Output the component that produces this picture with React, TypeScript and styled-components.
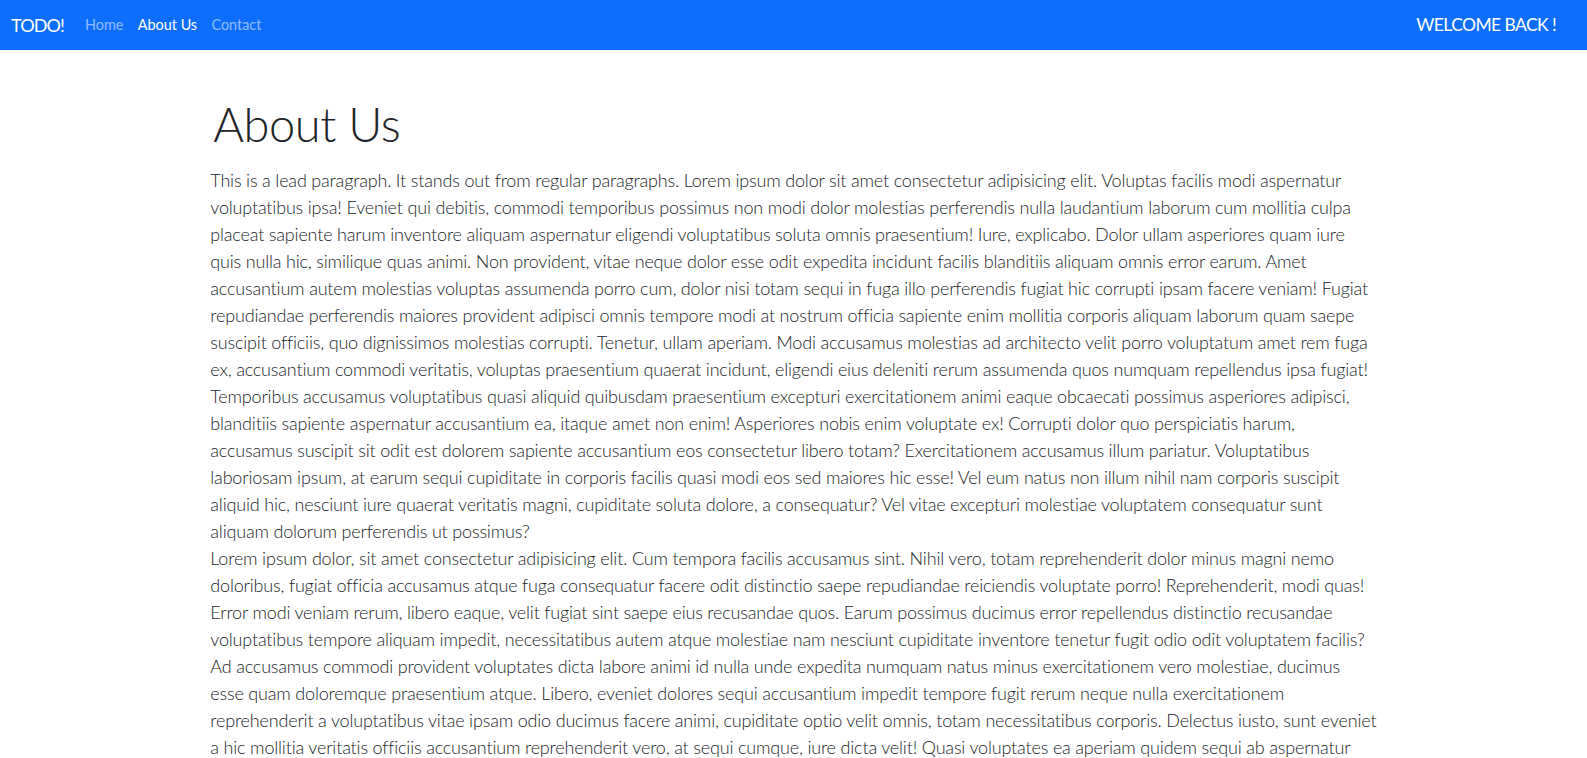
import React from "react";
import styled, { createGlobalStyle } from "styled-components";

const GlobalStyle = createGlobalStyle`
  html, body {
    margin: 0;
    padding: 0;
    background: #ffffff;
  }
  body {
    font-family: Lato, "Open Sans", sans-serif;
    color: #212529;
    -webkit-font-smoothing: antialiased;
  }
  * { box-sizing: border-box; }
  ::-webkit-scrollbar { width: 5px; }
  ::-webkit-scrollbar-track { background: #f0f0f0; }
  ::-webkit-scrollbar-thumb {
    background: #bdbdbd;
    border-left: 2px solid #f0f0f0;
    border-right: 1px solid #f0f0f0;
    border-top: 12px solid #f0f0f0;
  }
`;

const Navbar = styled.nav`
  height: 50px;
  background: #0d6efd;
  display: flex;
  align-items: center;
  justify-content: space-between;
  padding: 0 31px 0 11px;
`;

const NavLeft = styled.div`
  display: flex;
  align-items: center;
`;

const Brand = styled.a`
  font-family: Lato, sans-serif;
  font-size: 18px;
  font-weight: 400;
  line-height: 27px;
  color: #ffffff;
  text-decoration: none;
  letter-spacing: -0.9px;
  margin-right: 14px;
`;

const NavList = styled.ul`
  display: flex;
  align-items: center;
  list-style: none;
  margin: 0;
  padding: 0;
`;

const NavLink = styled.a<{ $active?: boolean }>`
  display: block;
  padding: 0 7.2px;
  font-family: Lato, sans-serif;
  font-size: 14.4px;
  line-height: 21.6px;
  font-weight: 400;
  text-decoration: none;
  color: ${(p) => (p.$active ? "#ffffff" : "rgba(255, 255, 255, 0.55)")};
`;

const Welcome = styled.span`
  font-family: Lato, sans-serif;
  font-size: 17.5px;
  line-height: 26px;
  font-weight: 400;
  color: #ffffff;
  letter-spacing: -0.6px;
`;

const Container = styled.main`
  max-width: 1188px;
  margin: 0 auto;
  padding: 46px 10.8px 43px;
`;

const Title = styled.h1`
  margin: 0 0 14.3px;
  font-family: Lato, sans-serif;
  font-size: 47px;
  line-height: 1.2;
  font-weight: 300;
  letter-spacing: -0.4px;
  color: #212529;
  padding-left: 3px;
`;

const Lead = styled.p`
  margin: 0;
  font-family: Lato, sans-serif;
  font-size: 18px;
  line-height: 27px;
  font-weight: 300;
  letter-spacing: -0.18px;
  color: #212529;
`;

const P1 =
  "This is a lead paragraph. It stands out from regular paragraphs. Lorem ipsum dolor sit amet consectetur adipisicing elit. Voluptas facilis modi aspernatur voluptatibus ipsa! Eveniet qui debitis, commodi temporibus possimus non modi dolor molestias perferendis nulla laudantium laborum cum mollitia culpa placeat sapiente harum inventore aliquam aspernatur eligendi voluptatibus soluta omnis praesentium! Iure, explicabo. Dolor ullam asperiores quam iure quis nulla hic, similique quas animi. Non provident, vitae neque dolor esse odit expedita incidunt facilis blanditiis aliquam omnis error earum. Amet accusantium autem molestias voluptas assumenda porro cum, dolor nisi totam sequi in fuga illo perferendis fugiat hic corrupti ipsam facere veniam! Fugiat repudiandae perferendis maiores provident adipisci omnis tempore modi at nostrum officia sapiente enim mollitia corporis aliquam laborum quam saepe suscipit officiis, quo dignissimos molestias corrupti. Tenetur, ullam aperiam. Modi accusamus molestias ad architecto velit porro voluptatum amet rem fuga ex, accusantium commodi veritatis, voluptas praesentium quaerat incidunt, eligendi eius deleniti rerum assumenda quos numquam repellendus ipsa fugiat! Temporibus accusamus voluptatibus quasi aliquid quibusdam praesentium excepturi exercitationem animi eaque obcaecati possimus asperiores adipisci, blanditiis sapiente aspernatur accusantium ea, itaque amet non enim! Asperiores nobis enim voluptate ex! Corrupti dolor quo perspiciatis harum, accusamus suscipit sit odit est dolorem sapiente accusantium eos consectetur libero totam? Exercitationem accusamus illum pariatur. Voluptatibus laboriosam ipsum, at earum sequi cupiditate in corporis facilis quasi modi eos sed maiores hic esse! Vel eum natus non illum nihil nam corporis suscipit aliquid hic, nesciunt iure quaerat veritatis magni, cupiditate soluta dolore, a consequatur? Vel vitae excepturi molestiae voluptatem consequatur sunt aliquam dolorum perferendis ut possimus?";

const P2 =
  "Lorem ipsum dolor, sit amet consectetur adipisicing elit. Cum tempora facilis accusamus sint. Nihil vero, totam reprehenderit dolor minus magni nemo doloribus, fugiat officia accusamus atque fuga consequatur facere odit distinctio saepe repudiandae reiciendis voluptate porro! Reprehenderit, modi quas! Error modi veniam rerum, libero eaque, velit fugiat sint saepe eius recusandae quos. Earum possimus ducimus error repellendus distinctio recusandae voluptatibus tempore aliquam impedit, necessitatibus autem atque molestiae nam nesciunt cupiditate inventore tenetur fugit odio odit voluptatem facilis? Ad accusamus commodi provident voluptates dicta labore animi id nulla unde expedita numquam natus minus exercitationem vero molestiae, ducimus esse quam doloremque praesentium atque. Libero, eveniet dolores sequi accusantium impedit tempore fugit rerum neque nulla exercitationem reprehenderit a voluptatibus vitae ipsam odio ducimus facere animi, cupiditate optio velit omnis, totam necessitatibus corporis. Delectus iusto, sunt eveniet a hic mollitia veritatis officiis accusantium reprehenderit vero, at sequi cumque, iure dicta velit! Quasi voluptates ea aperiam quidem sequi ab aspernatur officiis, nobis voluptate ratione iste quas in illum minima? Sapiente, repellat nisi. Quidem, natus incidunt eum quia ullam dolorem nemo, ducimus reiciendis atque aut excepturi provident distinctio tenetur voluptatem quisquam? Quos, praesentium ex vitae deserunt laudantium beatae aspernatur magni nihil repudiandae, reprehenderit pariatur dolorum sunt voluptates consequatur rem explicabo ipsum eligendi ullam esse. Ad, natus quo inventore eius distinctio iusto sed eaque unde voluptatibus quae aliquam reprehenderit neque, nam doloribus minima veritatis perferendis! Dolorem eos nostrum illo maiores placeat rerum totam tempora labore optio, architecto voluptatibus magni adipisci consequuntur, deleniti omnis nulla odit velit, enim temporibus ullam nesciunt numquam fugiat cumque officiis. Repellendus, praesentium beatae? Nobis quas dolorem asperiores, sequi ipsa quos accusantium eaque similique laborum explicabo consectetur tempora harum rem numquam ut corporis veniam odit, illum debitis saepe fugit quo perspiciatis modi provident. Magnam odio voluptatum distinctio repellat culpa laudantium ipsam, possimus vero maxime, commodi quisquam. Nemo sint, facere eos incidunt consequatur quaerat quod dolorum veritatis exercitationem ipsum expedita aliquid sed blanditiis laboriosam temporibus non.";

export default function App() {
  return (
    <>
      <GlobalStyle />
      <Navbar>
        <NavLeft>
          <Brand href="#">TODO!</Brand>
          <NavList>
            <li>
              <NavLink href="#">Home</NavLink>
            </li>
            <li>
              <NavLink href="#" $active>
                About Us
              </NavLink>
            </li>
            <li>
              <NavLink href="#">Contact</NavLink>
            </li>
          </NavList>
        </NavLeft>
        <Welcome>WELCOME BACK !</Welcome>
      </Navbar>
      <Container>
        <Title>About Us</Title>
        <Lead>
          {P1}
          <br />
          {P2}
        </Lead>
      </Container>
    </>
  );
}
